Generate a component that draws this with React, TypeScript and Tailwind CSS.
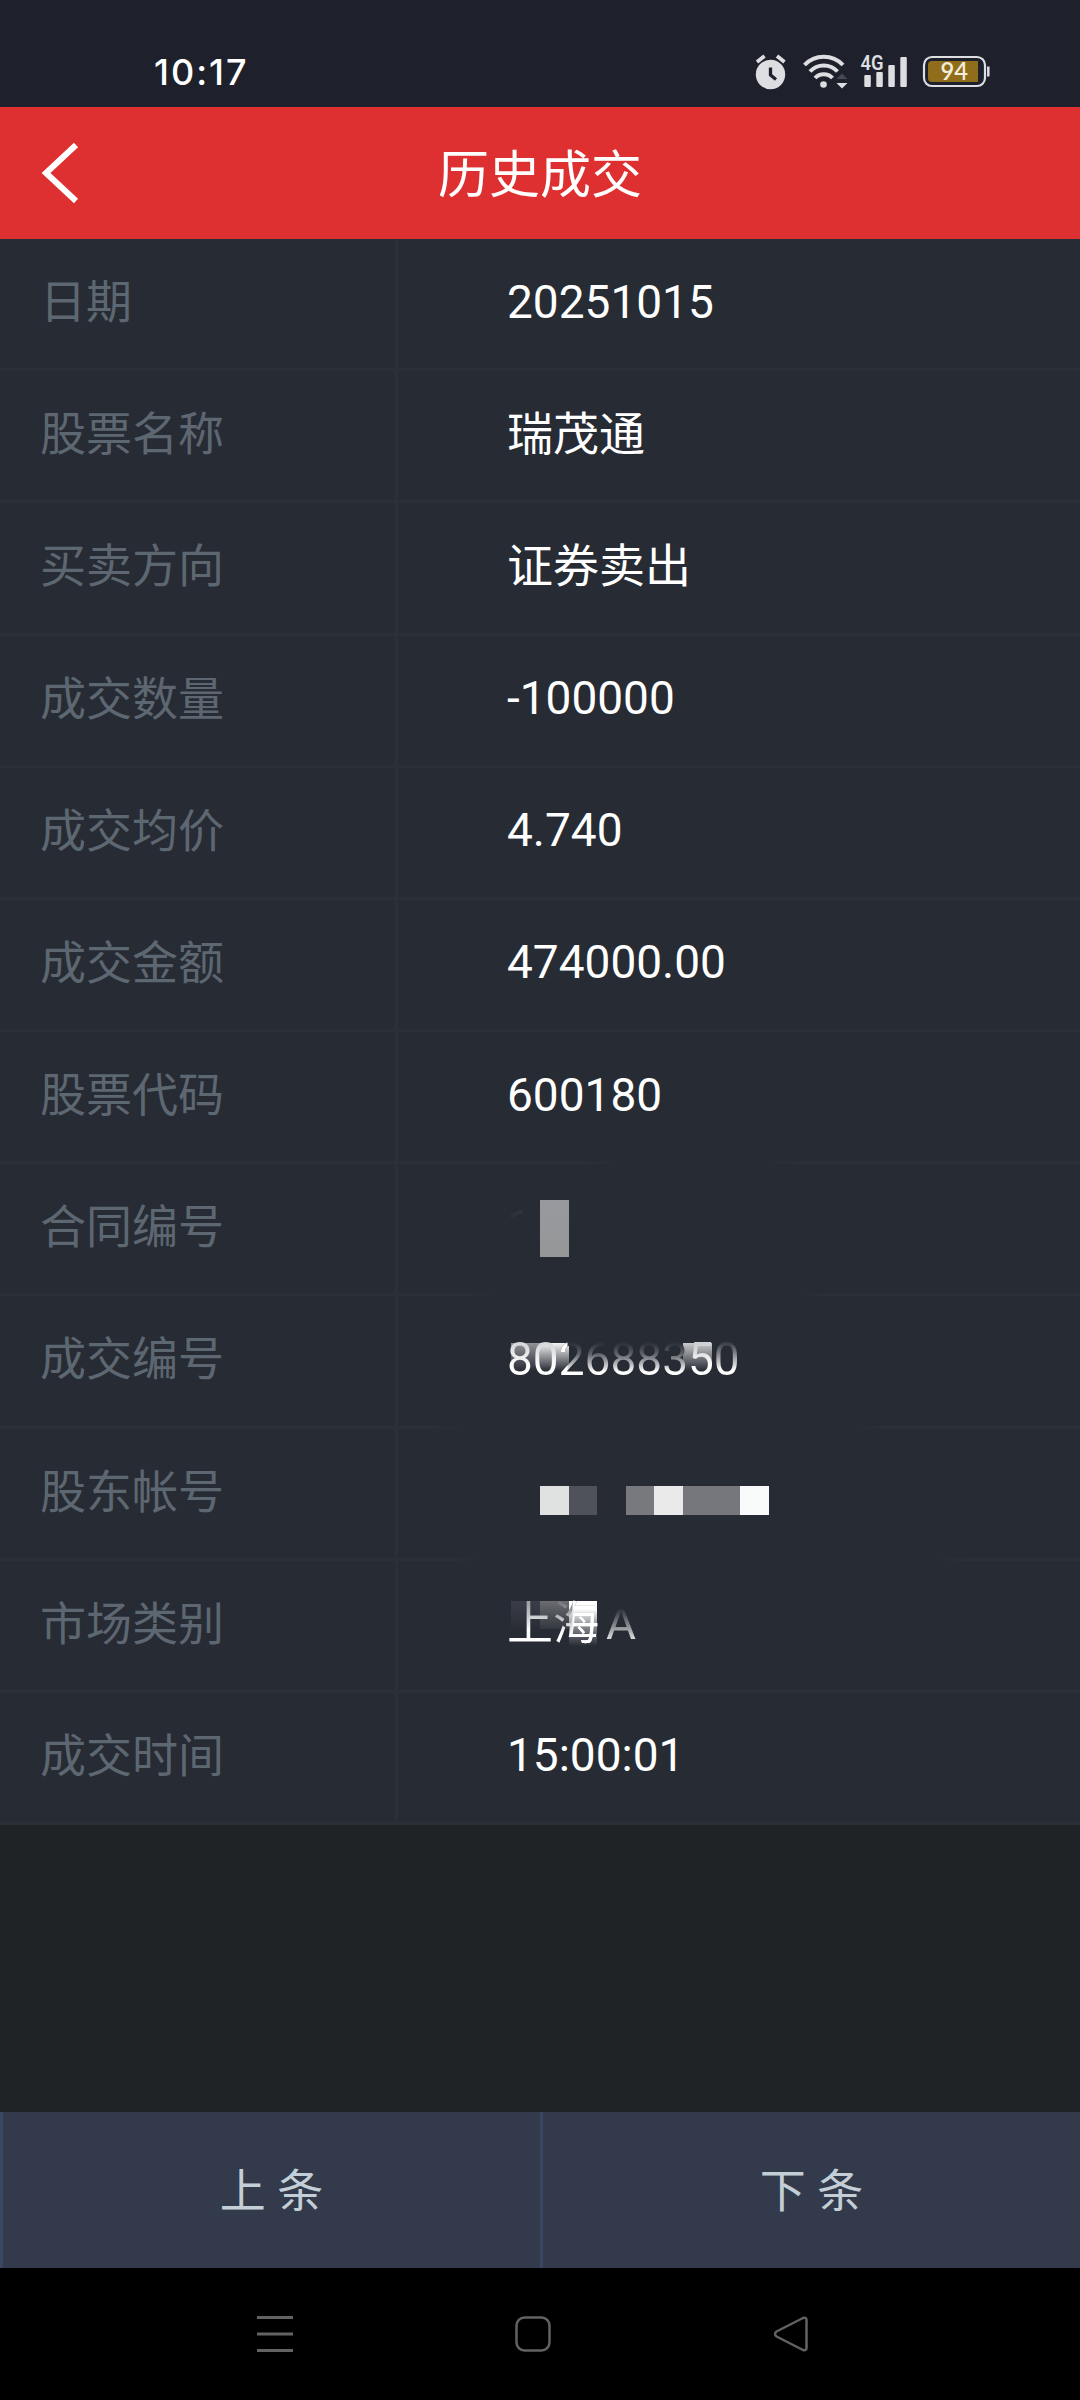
import type { ReactNode } from 'react';

const CJK = "font-['Roboto','Noto_Sans_CJK_SC',sans-serif]";

function StatusBar() {
  return (
    <div className="flex h-[107px] items-start justify-between bg-[#1e212b] text-white">
      <div className="ml-[154px] mt-[50px] font-['Inter',sans-serif] text-[36px] font-medium leading-[44px] tracking-[2px]">10:17</div>
      <svg className="mr-[80px] mt-[50px]" width="250" height="46" viewBox="750 50 250 46" fill="none">
        <circle cx="770.5" cy="74.5" r="14.7" fill="#dcdee1" />
        <path d="M757 62l7.5-6M784.500 62l-7.500-6" stroke="#dcdee1" strokeWidth="3.800" />
        <path d="M770.500 67.500v7.500l5.500 4.500" stroke="#1e212b" strokeWidth="3.300" />
        <g stroke="#dcdee1" strokeWidth="4">
          <path d="M804.500 65a26.500 26.500 0 0 1 38.500 0" />
          <path d="M810 71.500a18.500 18.500 0 0 1 27.500 0" />
          <path d="M815 78a12 12 0 0 1 17.500 0" />
        </g>
        <circle cx="823.500" cy="84.500" r="3.300" fill="#dcdee1" />
        <path d="M836.500 79l5.500-5.500 5.500 5.500z" fill="#454951" />
        <path d="M836.500 83h11l-5.500 5.500z" fill="#dcdee1" />
        <g fill="#dcdee1">
          <rect x="864.300" y="75" width="6.500" height="12" rx="1" />
          <rect x="876.300" y="72" width="6.500" height="15" rx="1" />
          <rect x="888.300" y="65" width="6.500" height="22" rx="1" />
          <rect x="900.300" y="57" width="6.500" height="30" rx="1" />
        </g>
        <text x="860.500" y="70" fill="#dcdee1" fontFamily="Roboto" fontWeight="600" fontSize="21" textLength="23" lengthAdjust="spacingAndGlyphs">4G</text>
        <rect x="924" y="57" width="61" height="29" rx="8" stroke="#dcdee1" strokeWidth="2.200" />
        <path d="M932 61h46v21h-46a4 4 0 0 1-4-4v-13a4 4 0 0 1 4-4z" fill="#8f6d1b" />
        <path d="M988.300 66.500v10" stroke="#dcdee1" strokeWidth="2.500" />
        <text x="940.500" y="80" fill="#f3ecd6" fontFamily="Lato" fontWeight="600" fontSize="25" textLength="27.500" lengthAdjust="spacingAndGlyphs">94</text>
      </svg>
    </div>
  );
}

function Row({ label, children }: { label: string; children: ReactNode }) {
  return (
    <div className="flex min-h-0 flex-1 border-b-[3px] border-[#2b2f38] text-[46px] leading-[54px]">
      <div className="flex w-[398px] items-center border-r-[3px] border-[#2b2f38] pb-[3px] pl-[40px] text-[#5d6771]">
        {label}
      </div>
      <div className="relative flex flex-1 items-center pb-[4px] pl-[109px] text-white">{children}</div>
    </div>
  );
}

function Fade({ className }: { className: string }) {
  return (
    <span
      className={`absolute -bottom-[4px] h-[5px] bg-[linear-gradient(90deg,transparent,#272b34_30px,#272b34_calc(100%-30px),transparent)] ${className}`}
    />
  );
}

export default function App() {
  return (
    <div className={`flex h-[2400px] w-[1080px] flex-col overflow-hidden bg-[#202326] ${CJK}`}>
      <StatusBar />
      <header className="relative flex h-[132px] items-center justify-center bg-[#df3031] pt-[6px] text-[51px] leading-[60px] text-white">
        <svg className="absolute left-[40px] top-[34px]" width="40" height="64" fill="none" stroke="#fff" strokeWidth="6">
          <path d="M36 4L6 32l30 28" />
        </svg>
        <h1>历史成交</h1>
      </header>
      <main className="flex h-[1586px] flex-col bg-[#272b34]">
        <Row label="日期">20251015</Row>
        <Row label="股票名称">瑞茂通</Row>
        <Row label="买卖方向">证券卖出</Row>
        <Row label="成交数量">-100000</Row>
        <Row label="成交均价">4.740</Row>
        <Row label="成交金额">474000.00</Row>
        <Row label="股票代码">
          600180
          <Fade className="left-[190px] w-[210px]" />
        </Row>
        <Row label="合同编号">
          <svg className="absolute left-[112px] top-[45px]" width="14" height="12">
            <path d="M1 5L13 0v4L1 9z" fill="#2f333c" />
          </svg>
          <span className="absolute left-[142px] top-[36px] h-[57px] w-[29px] bg-linear-to-b from-[#98999f] to-[#959696]" />
          <Fade className="left-[65px] w-[365px]" />
        </Row>
        <Row label="成交编号">
          <span className="absolute left-[113px] top-[47px] h-[28px] w-[29px] bg-linear-to-b from-[#929397] to-transparent" />
          <span className="absolute left-[142px] top-[47px] h-[28px] w-[29px] bg-linear-to-b from-[#f4f4f4] to-transparent" />
          <span className="absolute left-[285px] top-[47px] h-[28px] w-[29px] bg-linear-to-b from-[#c9cacc] to-transparent" />
          <span className="relative bg-[linear-gradient(180deg,#d8d9da_14px,#fff_34px)] bg-clip-text text-transparent">80</span>
          <span className="relative bg-[linear-gradient(90deg,#fff_8px,transparent_9px),linear-gradient(180deg,#2d313a_12px,#5e6168_22px,#fff_40px)] bg-clip-text text-transparent">2</span>
          <span className="relative bg-[linear-gradient(180deg,#2d313a_12px,#5e6168_22px,#fff_40px)] bg-clip-text text-transparent">6883</span>
          <span className="relative bg-[linear-gradient(180deg,#d0d1d3_14px,#fff_34px)] bg-clip-text text-transparent">5</span>
          <span className="relative bg-[linear-gradient(180deg,#3d4149_12px,#85878c_22px,#fff_38px)] bg-clip-text text-transparent">0</span>
          <Fade className="left-[35px] w-[450px]" />
        </Row>
        <Row label="股东帐号">
          <div className="absolute left-[142px] top-[57px] flex h-[29px]">
            <span className="w-[29px] bg-[#e0e2e1]" />
            <span className="w-[28px] bg-[#4f525a]" />
            <span className="ml-[29px] w-[28px] bg-[#78797e]" />
            <span className="w-[29px] bg-[#eaeaea]" />
            <span className="w-[57px] bg-[#76777c]" />
            <span className="w-[29px] bg-[#f8fbfa]" />
          </div>
          <Fade className="left-[50px] w-[520px]" />
        </Row>
        <Row label="市场类别">
          <span className="absolute left-[113px] top-[40px] h-[30px] w-[29px] bg-linear-to-b from-[#3b3e48] to-transparent" />
          <span className="absolute left-[142px] top-[40px] h-[28px] w-[29px] bg-linear-to-b from-[#6b6d71] to-[#33373f]" />
          <span className="absolute left-[171px] top-[40px] h-[45px] w-[28px] bg-[linear-gradient(180deg,#fff_8px,#8e9094_24px,transparent)]" />
          <span className="relative bg-[linear-gradient(180deg,#a0a2a6_8px,#c8c9cc_20px,#fff_34px)] bg-clip-text text-transparent">上</span>
          <span className="relative bg-[linear-gradient(90deg,transparent_19px,#fff_20px),linear-gradient(180deg,#7a7c81_8px,#b4b6b9_20px,#fff_38px)] bg-clip-text text-transparent">海</span>
          <span className="relative ml-[7px] bg-[linear-gradient(180deg,#272b34_12px,#7d8085_28px,#e2e3e4_44px)] bg-clip-text text-transparent">A</span>
        </Row>
        <Row label="成交时间">15:00:01</Row>
      </main>
      <div className="flex-1" />
      <footer className="flex h-[156px] text-[46px] text-[#c3ced6]">
        <button className="flex-1 border-l-[3px] border-[#384762] bg-[#323a4b] pt-[2px]">上 条</button>
        <button className="flex-1 border-l-[3px] border-[#384762] bg-[#323a4b] pt-[2px]">下 条</button>
      </footer>
      <nav className="flex h-[132px] bg-black pt-[45px]">
        <svg className="ml-[256px]" width="38" height="40" fill="none" stroke="#626262" strokeWidth="3">
          <path d="M1 4.500h36M1 21h36M1 37.500h36" />
        </svg>
        <svg className="ml-[220px]" width="38" height="40" fill="none" stroke="#626262" strokeWidth="2.500">
          <rect x="2.500" y="4.500" width="33" height="33" rx="8" />
        </svg>
        <svg className="ml-[220px]" width="38" height="40" fill="none" stroke="#626262" strokeWidth="2.500" strokeLinejoin="round">
          <path d="M31 5L4.500 18.500Q1.500 21 4.500 23.500L31 37Q34.500 38 34.500 35V7Q34.500 4 31 5Z" />
        </svg>
      </nav>
    </div>
  );
}
